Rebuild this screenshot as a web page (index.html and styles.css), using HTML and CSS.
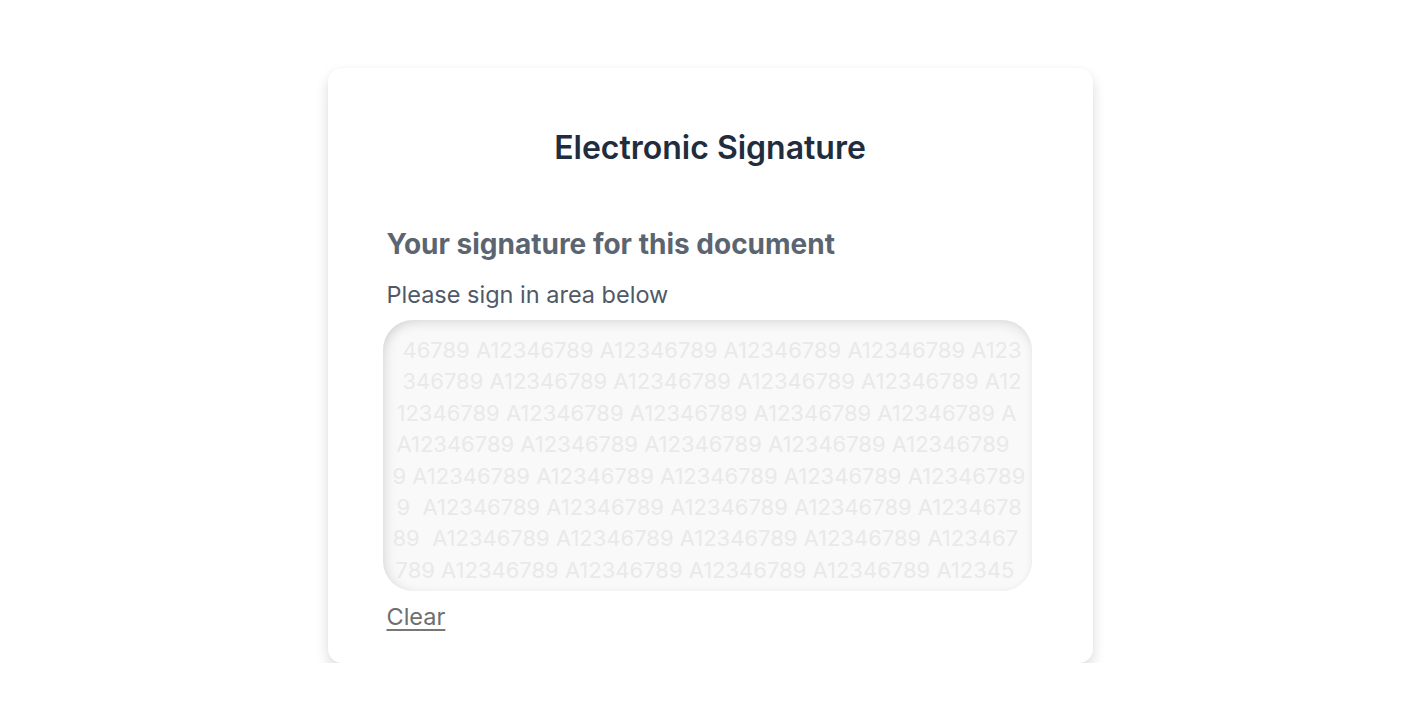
FILE: index.html
```html
<!DOCTYPE html>
<html lang="en">
<head>
<meta charset="utf-8">
<title>Electronic Signature</title>
<link rel="stylesheet" href="styles.css">
</head>
<body>
<main class="page">
  <section class="card">
    <h1 class="title">Electronic Signature</h1>
    <h2 class="heading">Your signature for this document</h2>
    <p class="hint">Please sign in area below</p>
    <div class="pad">
      <div class="watermark">
        <div class="row r1">46789 A12346789 A12346789 A12346789 A12346789 A123</div>
        <div class="row r2">346789 A12346789 A12346789 A12346789 A12346789 A12</div>
        <div class="row r3">12346789 A12346789 A12346789 A12346789 A12346789 A</div>
        <div class="row r4">A12346789 A12346789 A12346789 A12346789 A12346789</div>
        <div class="row r5">9 A12346789 A12346789 A12346789 A12346789 A12346789</div>
        <div class="row r6">9  A12346789 A12346789 A12346789 A12346789 A1234678</div>
        <div class="row r7">89  A12346789 A12346789 A12346789 A12346789 A123467</div>
        <div class="row r8">789 A12346789 A12346789 A12346789 A12346789 A12345</div>
      </div>
    </div>
    <a class="clear" href="#">Clear</a>
  </section>
</main>
</body>
</html>
```

FILE: styles.css
```css
html, body {
  margin: 0;
  padding: 0;
  background: #ffffff;
}

body {
  font-family: Inter, "Noto Sans", "Liberation Sans", sans-serif;
}

.page {
  display: flex;
  justify-content: center;
  padding-top: 68px;
}

.card {
  width: 765px;
  height: 595px;
  box-sizing: border-box;
  padding: 61px 55px 0 55px;
  background: #ffffff;
  border-radius: 14px;
  box-shadow: 0 7px 14px rgba(0, 0, 0, 0.14), 0 0 3px rgba(0, 0, 0, 0.03);
  display: flex;
  flex-direction: column;
  align-items: flex-start;
}

.title {
  align-self: stretch;
  margin: 0;
  font-size: 32px;
  line-height: 38px;
  font-weight: 600;
  color: #1f2d3f;
  text-align: center;
}

.heading {
  margin: 60px 0 0 4px;
  font-size: 28px;
  line-height: 34px;
  font-weight: 700;
  color: #5b6571;
}

.hint {
  margin: 20px 0 0 4px;
  font-size: 23.5px;
  line-height: 28px;
  font-weight: 400;
  color: #4f5967;
}

.pad {
  margin-top: 11px;
  width: 649px;
  height: 271px;
  box-sizing: border-box;
  padding-top: 15px;
  border-radius: 30px;
  background: #f9f9f9;
  box-shadow: inset 0 8px 14px -6px rgba(0, 0, 0, 0.13), inset 10px 0 14px -8px rgba(0, 0, 0, 0.11), inset -5px 0 10px -7px rgba(0, 0, 0, 0.06), inset 0 -5px 10px -7px rgba(0, 0, 0, 0.06);
}

.watermark {
  display: flex;
  flex-direction: column;
}

.row {
  white-space: pre;
  font-size: 22px;
  line-height: 31.4px;
  font-weight: 400;
  color: #e9e9e9;
}

.r1 { padding-left: 20px; }
.r2 { padding-left: 20px; }
.r3 { padding-left: 14px; }
.r4 { padding-left: 14px; }
.r5 { padding-left: 10px; }
.r6 { padding-left: 14px; }
.r7 { padding-left: 10px; }
.r8 { padding-left: 13px; }

.clear {
  margin: 12px 0 0 4px;
  font-size: 23.5px;
  line-height: 28px;
  color: #6e6e6e;
  text-decoration: underline;
  text-underline-offset: 4px;
  text-decoration-thickness: 2px;
  text-decoration-color: #777777;
}
```
